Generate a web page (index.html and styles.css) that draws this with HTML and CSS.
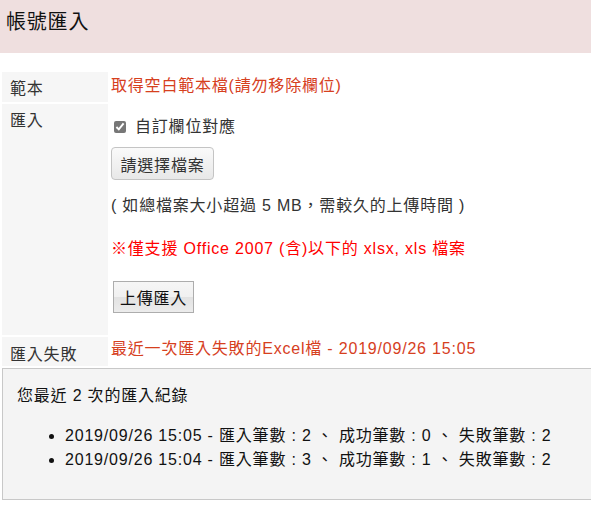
FILE: index.html
```html
<!DOCTYPE html>
<html lang="zh-Hant">
<head>
    <meta charset="UTF-8">
    <meta name="viewport" content="width=device-width, initial-scale=1.0">
    <title>帳號匯入</title>
    <link rel="stylesheet" href="styles.css">
</head>
<body>
    <header class="page-title">
        <h1>帳號匯入</h1>
    </header>

    <table class="form-table">
        <tr class="row-template">
            <th>範本</th>
            <td><a href="#" class="link">取得空白範本檔(請勿移除欄位)</a></td>
        </tr>
        <tr class="row-import">
            <th>匯入</th>
            <td>
                <label class="check">
                    <input type="checkbox" checked>
                    <span>自訂欄位對應</span>
                </label>
                <button type="button" class="btn-file">請選擇檔案</button>
                <p class="note">( 如總檔案大小超過 5 MB，需較久的上傳時間 )</p>
                <p class="warn">※僅支援 Office 2007 (含)以下的 xlsx, xls 檔案</p>
                <button type="button" class="btn-upload">上傳匯入</button>
            </td>
        </tr>
        <tr class="row-failed">
            <th>匯入失敗</th>
            <td><a href="#" class="link">最近一次匯入失敗的Excel檔 - 2019/09/26 15:05</a></td>
        </tr>
    </table>

    <section class="history">
        <p class="history-title">您最近 2 次的匯入紀錄</p>
        <ul>
            <li>2019/09/26 15:05 - 匯入筆數 : 2 、 成功筆數 : 0 、 失敗筆數 : 2</li>
            <li>2019/09/26 15:04 - 匯入筆數 : 3 、 成功筆數 : 1 、 失敗筆數 : 2</li>
        </ul>
    </section>
</body>
</html>
```

FILE: styles.css
```css
* {
    margin: 0;
    padding: 0;
    box-sizing: border-box;
}

body {
    font-family: "Liberation Sans", "Noto Sans CJK TC", sans-serif;
    font-size: 16px;
    letter-spacing: 0.05em;
    color: #333;
    background-color: #fff;
}

.page-title {
    height: 53px;
    background-color: #efdfdf;
    padding: 9px 0 0 6px;
}

.page-title h1 {
    font-size: 20px;
    font-weight: normal;
    line-height: 26px;
    color: #111;
}

.form-table {
    margin: 17px 0 0 0;
    border-collapse: separate;
    border-spacing: 2px;
}

.form-table th {
    width: 106px;
    background-color: #f6f6f6;
    font-weight: normal;
    text-align: left;
    vertical-align: top;
    padding: 6px 0 0 8px;
    line-height: 22px;
    color: #333;
}

.form-table td {
    vertical-align: top;
    padding: 0 0 0 1px;
    line-height: 24px;
}

.row-template th,
.row-template td {
    height: 30px;
}

.row-template td {
    padding-top: 2px;
}

.row-failed th,
.row-failed td {
    height: 28px;
}

.row-failed th {
    padding-top: 7px;
}

.row-failed td {
    padding-top: 0;
}

.link {
    color: #d6401e;
    text-decoration: none;
}

.check {
    display: flex;
    align-items: center;
    margin: 11px 0 0 2px;
    height: 24px;
}

.check input {
    width: 12px;
    height: 12px;
    margin: 0 9px 0 1px;
    accent-color: #777;
}

.btn-file {
    display: block;
    margin-top: 8px;
    width: 103px;
    height: 33px;
    font-family: inherit;
    font-size: 16px;
    letter-spacing: 0.05em;
    color: #333;
    background: linear-gradient(#fafafa, #e8e8e8);
    border: 1px solid #c4c4c4;
    border-radius: 4px;
}

.note {
    margin-top: 14px;
    line-height: 24px;
}

.warn {
    margin-top: 19px;
    color: #f00;
    line-height: 24px;
}

.btn-upload {
    display: block;
    margin: 20px 0 22px 2px;
    width: 81px;
    height: 32px;
    font-family: inherit;
    font-size: 16px;
    letter-spacing: 0.05em;
    color: #111;
    background: linear-gradient(#f6f6f6 0%, #f0f0f0 50%, #e2e2e2 51%, #ececec 100%);
    border: 1px solid #adadad;
    border-radius: 0;
}

.history {
    margin: 0 -10px 0 2px;
    height: 132px;
    background-color: #f4f4f4;
    border: 1px solid #c8c8c8;
    padding: 15px 0 0 14px;
    color: #111;
}

.history-title {
    line-height: 24px;
}

.history ul {
    margin-top: 16px;
    padding-left: 48px;
    line-height: 24px;
}
```
